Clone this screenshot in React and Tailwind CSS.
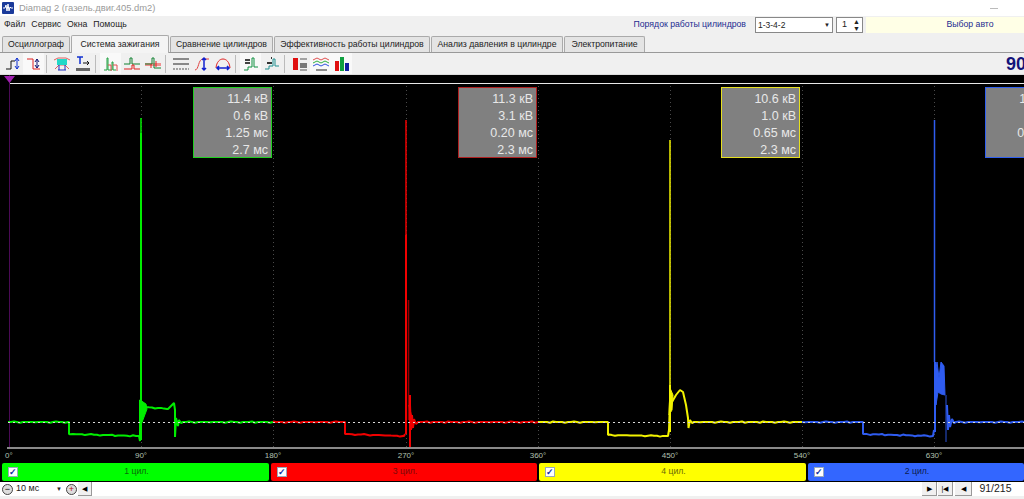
const font = "font-['Liberation_Sans',Arial,sans-serif]";

const tabs = [
  { label: 'Осциллограф', w: 'w-[68px]' },
  { label: 'Система зажигания', w: 'w-[98px]', active: true },
  { label: 'Сравнение цилиндров', w: 'w-[103px]' },
  { label: 'Эффективность работы цилиндров', w: 'w-[156px]' },
  { label: 'Анализ давления в цилиндре', w: 'w-[132px]' },
  { label: 'Электропитание', w: 'w-[81px]' },
];

// small toolbar drawings, each on a 16x16 grid, null = separator
const icons = [
  { d: [<path key="a" d="M1 13h5V5h4" stroke="#111" fill="none" />, <path key="b" d="M12 2v11M10 5l2-3 2 3M10 10l2 3 2-3" stroke="#1030d0" fill="none" />] },
  { on: true, d: [<path key="a" d="M1 3h6v10h7" stroke="#e02020" fill="none" />, <path key="b" d="M11 3v9M9 6l2-3 2 3M9 9l2 3 2-3" stroke="#101070" fill="none" />] },
  null,
  { d: [<path key="a" d="M0 4l4-2h8l4 2M1 13l4-4h6l4 4" stroke="#e06060" fill="none" />, <rect key="b" x="3" y="3" width="10" height="6" fill="#20d8c8" />, <path key="c" d="M5 9v5M11 9v5M4 14h8" stroke="#2030c0" fill="none" />] },
  { d: [<path key="a" d="M2 1h6M5 1v7" stroke="#1030d0" strokeWidth="1.500" fill="none" />, <path key="b" d="M8 7h6M12 5l2 2-2 2" stroke="#111" fill="none" />, <path key="c" d="M1 12h14v3H1z" fill="#666" />] },
  null,
  { on: true, d: [<path key="a" d="M1 14h3V2h1v12h4V6h1v8h3" stroke="#20a040" fill="none" />, <path key="b" d="M5 9h3v6M10 9h4v6" stroke="#e05050" fill="none" />] },
  { d: [<path key="a" d="M0 8h6V2h2v6h8" stroke="#108030" fill="none" />, <path key="b" d="M0 13h8V9h2v4h6" stroke="#e02020" fill="none" />] },
  { d: [<rect key="c" x="0" y="7" width="16" height="3" fill="#f09090" />, <path key="a" d="M0 8h7V2h2v10h7" stroke="#108030" fill="none" />, <path key="b" d="M6 8v4M11 5v6" stroke="#e02020" fill="none" />] },
  null,
  { d: [<path key="a" d="M0 3h16M0 8h16" stroke="#222" fill="none" />, <path key="b" d="M0 13h16" stroke="#555" strokeDasharray="2 1" fill="none" />] },
  { d: [<path key="a" d="M1 14c4 0 3-11 8-11h6" stroke="#e04040" fill="none" />, <path key="b" d="M10 2v12M8 4l2-2 2 2M8 12l2 2 2-2" stroke="#1020d0" strokeWidth="1.500" fill="none" />] },
  { d: [<path key="a" d="M1 12C2 0 14 0 15 12" stroke="#e02020" fill="none" />, <path key="b" d="M2 12h12M4 10l-2 2 2 2M12 10l2 2-2 2" stroke="#1020d0" strokeWidth="1.500" fill="none" />] },
  null,
  { on: true, d: [<path key="a" d="M1 14h4v-3h4V2h2v9h4" stroke="#109040" fill="none" />, <path key="b" d="M2 4h5M2 7h5" stroke="#444" strokeWidth="2" fill="none" />] },
  { d: [<path key="a" d="M1 13h4v-3h4V3h2v7h4" stroke="#209090" fill="none" />, <path key="b" d="M3 7h5M7 2h1" stroke="#333" strokeWidth="2" fill="none" />] },
  null,
  { d: [<rect key="a" x="1" y="2" width="5" height="12" fill="#e01010" />, <path key="b" d="M8 3h7M8 14h7" stroke="#555" fill="none" />, <rect key="c" x="8" y="7" width="7" height="5" fill="#777" />] },
  { on: true, d: [<path key="a" d="M0 4l4-2 4 2 4-2 4 2" stroke="#e05050" fill="none" />, <path key="b" d="M0 7l4-2 4 2 4-2 4 2" stroke="#30b040" fill="none" />, <path key="c" d="M0 10l4-2 4 2 4-2 4 2" stroke="#3050e0" fill="none" />, <path key="d" d="M3 14h11" stroke="#222" fill="none" />] },
  { on: true, d: [<rect key="a" x="1" y="5" width="4" height="10" fill="#e01010" />, <rect key="b" x="6" y="1" width="4" height="14" fill="#10a040" />, <rect key="c" x="11" y="7" width="4" height="8" fill="#1020a0" />] },
];

const boxes = [
  { rows: ['11.4 кВ', '0.6 кВ', '1.25 мс', '2.7 мс'], border: 'border-[#1fd01f]', pos: 'left-[193px]' },
  { rows: ['11.3 кВ', '3.1 кВ', '0.20 мс', '2.3 мс'], border: 'border-[#b02020]', pos: 'left-[458px]' },
  { rows: ['10.6 кВ', '1.0 кВ', '0.65 мс', '2.3 мс'], border: 'border-[#e6e020]', pos: 'left-[721px]' },
  { rows: ['11.2 кВ', '0.8 кВ', '0.90 мс', '2.5 мс'], border: 'border-[#3060f0]', pos: 'left-[985px]' },
];

const legend = [
  { label: '1 цил.', bg: 'bg-[#00ff00]', text: 'text-[#0a6a0a]', w: 'w-[267px]' },
  { label: '3 цил.', bg: 'bg-[#ff0000]', text: 'text-[#7a0a0a]', w: 'w-[266px]' },
  { label: '4 цил.', bg: 'bg-[#ffff00]', text: 'text-[#6a6a0a]', w: 'w-[267px]' },
  { label: '2 цил.', bg: 'bg-[#3366ff]', text: 'text-[#0c1c50]', w: 'flex-1' },
];

// base line with a bit of wobble, deterministic
function wobble(x1, y1, x2, y2) {
  const pts = [];
  for (let x = x1; x < x2; x += 3) {
    const t = (x - x1) / (x2 - x1);
    const j = ((x * 7) % 5 === 0 ? 0.7 : 0) - ((x * 3) % 7 === 0 ? 0.5 : 0);
    pts.push(`${x},${(y1 + (y2 - y1) * t + j).toFixed(1)}`);
  }
  pts.push(`${x2},${y2}`);
  return pts.join(' ');
}

const traces = [
  {
    color: '#00ee00',
    lines: [`${wobble(8, 422, 69, 422)} 69,434 ${wobble(70, 434, 139, 436)} 140,441 140,400 ${wobble(146, 407, 168, 409)} 172,405 174,403 175,410 175,437 176,418 178,426 179,420 181,423 ${wobble(183, 422, 273, 422)}`],
    spike: 'M141 118V133',
    body: 'M141 133V440',
    blob: '140,400 146,404 147,409 141,425',
  },
  {
    color: '#f00000',
    lines: [`${wobble(273, 422, 345, 422)} 345,434 ${wobble(346, 434, 404, 436)} 405,434`, `410,405 411,430 412,415 413,428 414,419 416,424 ${wobble(418, 422, 538, 422)}`],
    spike: 'M406 120V235',
    body: 'M406 235V434M410 395V447',
    blob: '409,405 412,418 414,424 411,430',
    dark: 'M408.500 300V420',
  },
  {
    color: '#f2f200',
    lines: [`${wobble(538, 422, 608, 422)} 608,435 ${wobble(609, 435, 668, 436)} 669,430 670,400 672,402 676,395 680,390 683,392 686,405 688,418 688.500,428 690,420 692,423 ${wobble(694, 422, 802, 422)}`],
    spike: 'M670 140V385',
    body: 'M670 385V432',
    blob: '670,388 673,395 672,410 669,415',
  },
  {
    color: '#2f5cf0',
    lines: [`${wobble(802, 422, 863, 422)} 863,434 ${wobble(864, 434, 933, 436)} 934,430`, `947,405 948,430 949,415 950,427 952,419 954,423 ${wobble(956, 422, 1024, 422)}`],
    spike: 'M934.500 120V362',
    body: 'M935 362V432',
    blob: '935,375 937,362 939,378 941,362 944,366 945,395 941,394 938,392 936,405',
    dark: 'M946 395V442',
  },
];

const ticks = [
  { x: 141, label: '90°' },
  { x: 273, label: '180°' },
  { x: 406, label: '270°' },
  { x: 538, label: '360°' },
  { x: 670, label: '450°' },
  { x: 802, label: '540°' },
  { x: 934, label: '630°' },
];

function Chart() {
  return (
    <svg className="absolute inset-0 w-[1024px] h-[388px]" viewBox="0 75 1024 388">
      <line x1="9" y1="83.500" x2="1024" y2="83.500" stroke="#e8e8e8" />
      <line x1="9.500" y1="75" x2="9.500" y2="447" stroke="#4a0a55" />
      <path d="M4 76h11l-5.500 7z" fill="#a020b0" />
      {ticks.map((t) => (
        <line key={t.x} x1={t.x + 0.5} y1="86" x2={t.x + 0.5} y2="447" stroke="#4a4a4a" strokeDasharray="1 3" />
      ))}
      <line x1="7" y1="448" x2="1024" y2="448" stroke="#8a8a8a" strokeWidth="2" />
      {traces.map((t) => (
        <g key={t.color} stroke={t.color} fill="none">
          {t.lines.map((pts, i) => (
            <polyline key={i} points={pts} strokeWidth="2" strokeLinejoin="bevel" />
          ))}
          <path d={t.spike} strokeWidth="1.500" />
          <path d={t.body} strokeWidth="2" />
          <polygon points={t.blob} fill={t.color} />
          {t.dark && <path d={t.dark} strokeWidth="1.500" strokeOpacity="0.6" />}
        </g>
      ))}
      <line x1="8" y1="422.500" x2="1024" y2="422.500" stroke="#d8d8d8" strokeDasharray="2 3" />
      <g fontFamily="'Liberation Sans', Arial, sans-serif" fontSize="8" fill="#b0c0b0">
        <text x="5" y="458">0°</text>
        {ticks.map((t) => (
          <text key={t.x} x={t.x} y="458" textAnchor="middle">{t.label}</text>
        ))}
      </g>
    </svg>
  );
}

function Legend() {
  return (
    <div className="flex h-[19px] bg-black pl-[2px] pb-px gap-[2px] shrink-0">
      {legend.map((c) => (
        <div key={c.label} className={`${c.w} ${c.bg} rounded-[2px] flex items-center pl-[6px]`}>
          <span className="w-[10px] h-[10px] bg-white border border-[#9ab] flex items-center justify-center text-[9px] leading-none text-[#1030a0] font-bold">✓</span>
          <span className={`flex-1 text-center text-[8.700px] pr-[14px] ${c.text}`}>{c.label}</span>
        </div>
      ))}
    </div>
  );
}

function NavButton({ children, w = 'w-[15px]' }) {
  return (
    <div className={`${w} h-[14px] bg-[#f0f0f0] border-r border-b border-[#999] flex items-center justify-center text-[7px] text-black leading-none`}>
      {children}
    </div>
  );
}

export default function App() {
  return (
    <div className={`${font} w-[1024px] h-[499px] overflow-hidden bg-[#f0f0f0] flex flex-col text-[9px]`}>
      {/* заголовок */}
      <div className="h-[16px] bg-white flex items-center pl-[2px] shrink-0">
        <svg width="12" height="12" viewBox="0 0 12 12">
          <rect width="12" height="12" rx="1" fill="#1a3a9a" />
          <path d="M1 6h2l1-3 1 6 1-7 1 7 1-4 1 1h2" stroke="#fff" fill="none" />
        </svg>
        <span className="ml-[5px] text-[9.400px] text-[#9a9a9a]">Diamag 2 (газель.двиг.405.dm2)</span>
        <span className="ml-auto mr-[26px] w-[8px] h-px bg-[#bbb]"></span>
      </div>

      {/* меню */}
      <div className="h-[16px] mt-px mb-[2px] flex items-center shrink-0">
        <div className="flex gap-[6px] pl-[4px] text-[#222] text-[8.700px]">
          <span>Файл</span>
          <span>Сервис</span>
          <span>Окна</span>
          <span>Помощь</span>
        </div>
        <div className="ml-auto -mr-[50px] flex items-center">
          <span className="text-[#1c2c90] text-[8.700px]">Порядок работы цилиндров</span>
          <div className="ml-[9px] w-[78px] h-[16px] bg-white border border-[#888] flex items-center justify-between pl-[2px] pr-[2px] text-[8.500px] text-[#222]">
            <span>1-3-4-2</span>
            <span className="text-[6px] leading-none">▼</span>
          </div>
          <div className="ml-[3px] w-[27px] h-[16px] bg-white border border-[#888] flex items-center justify-between pl-[5px] pr-[2px] text-[9px] text-[#222]">
            <span>1</span>
            <span className="flex flex-col text-[7px] leading-[7px]">
              <span>▲</span>
              <span>▼</span>
            </span>
          </div>
          <div className="ml-[3px] w-[208px] h-[16px] bg-[#ffffe6] flex items-center justify-center text-[8.700px] text-[#1c2c90]">Выбор авто</div>
        </div>
      </div>

      {/* вкладки */}
      <div className="h-[18px] flex items-end pl-[2px] gap-px border-b border-[#999] shrink-0">
        {tabs.map((t) => (
          <div
            key={t.label}
            className={`${t.w} flex items-center justify-center border border-b-0 border-[#aaa] rounded-t-[2px] whitespace-nowrap text-[8.700px] text-[#222] ${
              t.active ? 'h-[18px] bg-[#f4f4f4] relative top-px' : 'h-[16px] bg-[#e4e4e4]'
            }`}
          >
            {t.label}
          </div>
        ))}
      </div>

      {/* панель инструментов */}
      <div className="h-[22px] flex items-center pl-[2px] shrink-0 border-b border-[#ddd]">
        {icons.map((ic, i) =>
          ic ? (
            <span key={i} className={`w-[21px] h-[21px] flex items-center justify-center shrink-0 ${ic.on ? 'bg-[#f9f9f9]' : ''}`}>
              <svg width="16" height="16" viewBox="0 0 16 16">{ic.d}</svg>
            </span>
          ) : (
            <span key={i} className="w-px h-[18px] bg-[#bbb] ml-[2px] mr-[4px] shrink-0"></span>
          )
        )}
        <div className="ml-auto w-[18px] overflow-hidden whitespace-nowrap text-[18px] leading-none font-bold text-[#14147a]">90</div>
      </div>

      {/* график */}
      <div className="relative h-[388px] bg-black shrink-0 overflow-hidden">
        <Chart />
        {boxes.map((b) => (
          <div
            key={b.pos}
            className={`absolute top-[12px] ${b.pos} w-[79px] h-[71px] bg-[#808080] border ${b.border} text-right pr-[3px] pt-[3px] text-[#e8e8e8] text-[12.500px] leading-[17px]`}
          >
            {b.rows.map((r) => (
              <div key={r}>{r}</div>
            ))}
          </div>
        ))}
      </div>

      <Legend />

      {/* нижняя панель */}
      <div className="h-[14px] bg-white flex items-center shrink-0">
        <span className="ml-[2px] w-[11px] h-[11px] rounded-full border border-[#444] bg-[#ddd] flex items-center justify-center text-[9px] leading-none">−</span>
        <div className="ml-[3px] w-[49px] h-[14px] flex items-center justify-between pr-[3px] text-[9px] text-[#222]">
          <span>10 мс</span>
          <span className="text-[6px]">▼</span>
        </div>
        <span className="ml-px w-[11px] h-[11px] rounded-full border border-[#444] bg-[#ddd] flex items-center justify-center text-[9px] leading-none text-[#b01010]">+</span>
        <div className="ml-px"><NavButton w="w-[14px]">◀</NavButton></div>
        <div className="flex-1"></div>
        <NavButton>▶</NavButton>
        <div className="ml-px"><NavButton>|◀</NavButton></div>
        <div className="ml-[2px]"><NavButton w="w-[17px]">◀</NavButton></div>
        <span className="w-[47px] text-center text-[10.500px] text-[#222]">91/215</span>
        <div className="w-[5px]"></div>
      </div>
    </div>
  );
}
